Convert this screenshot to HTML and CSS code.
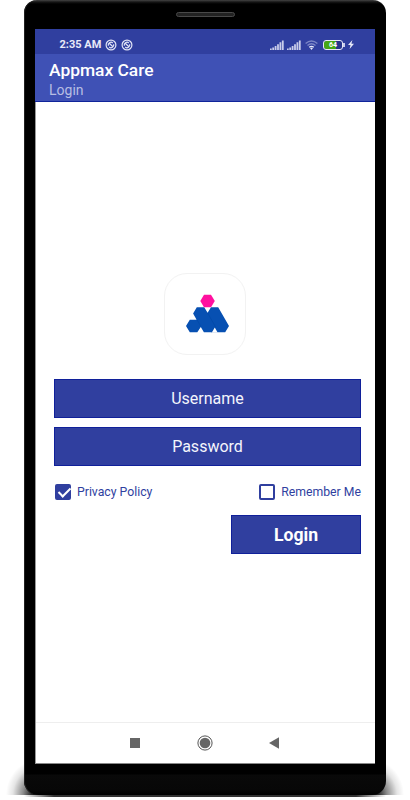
FILE: index.html
```html
<!DOCTYPE html>
<html lang="en">

<head>
    <meta charset="UTF-8">
    <meta name="viewport" content="width=device-width, initial-scale=1.0">
    <title>Appmax Care</title>
    <link rel="stylesheet" href="styles.css">
</head>

<body>
    <div class="phone">
        <div class="speaker"></div>
        <div class="screen">
            <div class="status-bar">
                <span class="time">2:35 AM</span>
                <svg class="sync" viewBox="0 0 12 12">
                    <circle cx="6" cy="6" r="4.9" />
                    <path d="M3.4 6.8A2.7 2.7 0 0 1 7.8 4M8.6 5.2A2.7 2.7 0 0 1 4.2 8M4 4l4.2 4" />
                </svg>
                <svg class="sync" viewBox="0 0 12 12">
                    <circle cx="6" cy="6" r="4.9" />
                    <path d="M3.4 6.8A2.7 2.7 0 0 1 7.8 4M8.6 5.2A2.7 2.7 0 0 1 4.2 8M4 4l4.2 4" />
                </svg>
                <svg class="signal" viewBox="0 0 14 10">
                    <path d="M.8 8.5V10M3.2 7.5V10M5.6 6V10M8 4.3V10M10.4 2.2V10M12.8.4V10" />
                </svg>
                <svg class="signal second" viewBox="0 0 14 10">
                    <path d="M.8 8.5V10M3.2 7.5V10M5.6 6V10M8 4.3V10M10.4 2.2V10M12.8.4V10" />
                </svg>
                <svg class="wifi" viewBox="0 0 13 10">
                    <path class="weak" d="M.6 3.6Q6.5-1.7 12.4 3.6" />
                    <path class="weak" d="M2.5 5.6Q6.5 2 10.5 5.6" />
                    <path d="M4.2 7.2Q6.5 5.4 8.8 7.2" />
                    <path class="dot" d="M5 8.1Q6.5 7 8 8.1L6.5 10z" />
                </svg>
                <span class="battery"><span class="level">64</span></span>
                <svg class="bolt" viewBox="0 0 6 9">
                    <path d="M4.4 0L0 5h2.5L1.6 9L6 3.7H3.4z" />
                </svg>
            </div>

            <div class="toolbar">
                <h1>Appmax Care</h1>
                <p>Login</p>
            </div>

            <div class="content">
                <div class="logo">
                    <svg viewBox="0 0 44 39">
                        <path class="pink" d="M18 0.7h7L28.8 7L25 13.3h-7L14.3 7z" />
                        <path class="blue" d="M10.8 13.2h7.4L21.6 18.8L25 13.2h7.2L43 32L39.2 38.3H17.9L14.8 33L11.3 38.3H3.8L0 32L3.8 25.7h6.8L7.1 19.5z" />
                        <path class="seam" d="M11 25.7L14.8 32.3M21.6 19L29.2 32.3M29.2 32.3L25.8 38.3" />
                        <path class="notch" d="M25.8 38.6L28.8 33.6L31.6 38.6z" />
                    </svg>
                </div>

                <form id="loginForm">
                    <input type="text" class="field" placeholder="Username" aria-label="Username">
                    <input type="password" class="field" placeholder="Password" aria-label="Password">

                    <div class="options">
                        <label><input type="checkbox" class="check" checked><span>Privacy Policy</span></label>
                        <label><input type="checkbox" class="check"><span>Remember Me</span></label>
                    </div>

                    <button type="submit" class="login-btn">Login</button>
                </form>
            </div>

            <div class="nav-bar">
                <svg class="recent" viewBox="0 0 10 10"><path d="M0 0h10v10H0z" /></svg>
                <svg class="home" viewBox="0 0 16 16">
                    <circle class="ring" cx="8" cy="8" r="7.1" />
                    <circle cx="8" cy="8" r="5.3" />
                </svg>
                <svg class="back" viewBox="0 0 10 12"><path d="M0 6L10 .2v11.6z" /></svg>
            </div>
        </div>
    </div>

    <script>
        document.getElementById('loginForm').addEventListener('submit', function (e) {
            e.preventDefault();
        });
    </script>
</body>

</html>
```

FILE: styles.css
```css
* {
    margin: 0;
    padding: 0;
    box-sizing: border-box;
}

body {
    width: 410px;
    height: 800px;
    overflow: hidden;
    background: white;
    font-family: Roboto, 'Liberation Sans', sans-serif;
}

/* phone frame */
.phone {
    position: relative;
    width: 362px;
    height: 795px;
    margin-left: 24px;
    padding: 29px 11px 0;
    background: linear-gradient(#444 0, #161616 2px, #000 4px, #000 774px, #090909 775px, #070707 790px, #000 100%);
    border-radius: 13px 13px 14px 14px;
    box-shadow: inset 1px 0 #222;
}

/* floor shadow at both bottom corners */
.phone::before,
.phone::after {
    content: '';
    position: absolute;
    z-index: -1;
    bottom: -2px;
    width: 201px;
    height: 35px;
}

.phone::before {
    left: -20px;
    background:
        linear-gradient(90deg, transparent 20px, #333 50px) 0 100% / 100% 3px no-repeat,
        radial-gradient(ellipse 34px 36px at 100% 100%, #000 15%, rgba(0, 0, 0, 0.45) 50%, rgba(0, 0, 0, 0.1) 80%, transparent) 0 0 / 36px 33px no-repeat;
}

.phone::after {
    right: -20px;
    background:
        linear-gradient(270deg, transparent 20px, #333 50px) 0 100% / 100% 3px no-repeat,
        radial-gradient(ellipse 34px 36px at 0 100%, #000 15%, rgba(0, 0, 0, 0.45) 50%, rgba(0, 0, 0, 0.1) 80%, transparent) 100% 0 / 36px 33px no-repeat;
}

.speaker {
    width: 59px;
    height: 5px;
    margin: -17px auto 12px;
    background: #222;
    border: 1px solid #494949;
    border-radius: 3px;
}

.screen {
    display: flex;
    flex-direction: column;
    height: 735px;
    background: white;
    border-left: 1px solid #999;
    border-bottom: 1px solid #888;
}

.status-bar {
    display: flex;
    align-items: center;
    height: 25px;
    padding: 6px 21px 0 24.5px;
    margin-left: -1px;
    background: #303f9f;
    color: #e8eaf8;
}

.time {
    width: 45.5px;
    font-size: 11px;
    font-weight: 700;
    line-height: 14px;
    white-space: nowrap;
}

.sync {
    width: 12px;
    height: 12px;
    margin-right: 4px;
    fill: none;
    stroke: #e0e3f5;
    stroke-width: 1.2;
}

.signal {
    width: 14px;
    height: 10px;
    margin-left: auto;
    stroke: #c9cdea;
    stroke-width: 1.8;
}

.signal.second {
    margin-left: 3px;
}

.wifi {
    width: 13px;
    height: 10px;
    margin-left: 4px;
    fill: none;
    stroke: #e8eaf8;
    stroke-width: 1.3;
}

.wifi .weak {
    stroke: #7c86c6;
}

.wifi .dot {
    fill: #e8eaf8;
    stroke: none;
}

.battery {
    position: relative;
    width: 20px;
    height: 10px;
    margin: 0 5px;
    border: 1px solid #e8eaf8;
    border-radius: 3px;
    background: linear-gradient(90deg, #45a716 0 12px, #26348c 12px);
    background-clip: padding-box;
}

.battery::after {
    content: '';
    position: absolute;
    top: 2px;
    right: -3px;
    width: 2px;
    height: 4px;
    background: #c9cdea;
}

.level {
    display: block;
    font-size: 7px;
    font-weight: 700;
    line-height: 8px;
    text-align: center;
    color: white;
}

.bolt {
    width: 6px;
    height: 9px;
    fill: #e8eaf8;
}

.toolbar {
    height: 48px;
    margin-left: -1px;
    padding: 5px 14px 0;
    background: #3f51b5;
    border-bottom: 1px solid #10249a;
}

.toolbar h1 {
    font-size: 17.4px;
    font-weight: 500;
    line-height: 22px;
    color: white;
}

.toolbar p {
    font-size: 14px;
    line-height: 18px;
    color: #b7bee3;
}

.content {
    flex: 1;
    padding: 171px 14px 0 18px;
}

.logo {
    display: flex;
    justify-content: center;
    width: 82px;
    height: 82px;
    margin: 0 auto 24px 110px;
    padding-top: 20px;
    padding-left: 5px;
    border: 1px solid #f2f2f2;
    border-radius: 23px;
}

.logo svg {
    width: 44px;
    height: 39px;
}

.pink {
    fill: #ff109f;
}

.blue {
    fill: #0750b2;
}

.seam {
    fill: none;
    stroke: #0047a4;
    stroke-width: 0.6;
}

.notch {
    fill: white;
}

.field,
.login-btn {
    display: block;
    width: 307px;
    height: 39px;
    background: #303f9f;
    border: 1px solid #10209a;
    border-radius: 0;
    font-family: inherit;
    text-align: center;
    color: white;
    outline: none;
}

.field {
    margin-bottom: 9px;
    font-size: 16px;
}

.field::placeholder {
    color: #f4f5fc;
    opacity: 1;
}

.options {
    display: flex;
    justify-content: space-between;
    margin: 17px 0 15px 1px;
}

.options label {
    display: flex;
    align-items: center;
    height: 17px;
    font-size: 12.25px;
    line-height: 15px;
    color: #303f9f;
}

.options span {
    padding-top: 2px;
}

.check {
    appearance: none;
    width: 16px;
    height: 16px;
    margin-right: 6px;
    border: 2px solid #303f9f;
    border-radius: 2px;
}

.check:checked {
    background: #303f9f;
}

.check:checked::after {
    content: '';
    display: block;
    width: 5px;
    height: 10px;
    margin: -1px 0 0 4px;
    border: solid white;
    border-width: 0 2px 2px 0;
    transform: rotate(45deg);
}

.login-btn {
    width: 130px;
    margin-left: auto;
    font-size: 17.6px;
    font-weight: 700;
    cursor: pointer;
}

.nav-bar {
    display: flex;
    align-items: center;
    height: 41px;
    padding-left: 94px;
    border-top: 1px solid #eee;
    fill: #666;
}

.recent {
    width: 10px;
    height: 10px;
}

.home {
    width: 16px;
    height: 16px;
    margin: 0 56px 0 57px;
}

.ring {
    fill: none;
    stroke: #555;
}

.back {
    width: 10px;
    height: 12px;
}
```
